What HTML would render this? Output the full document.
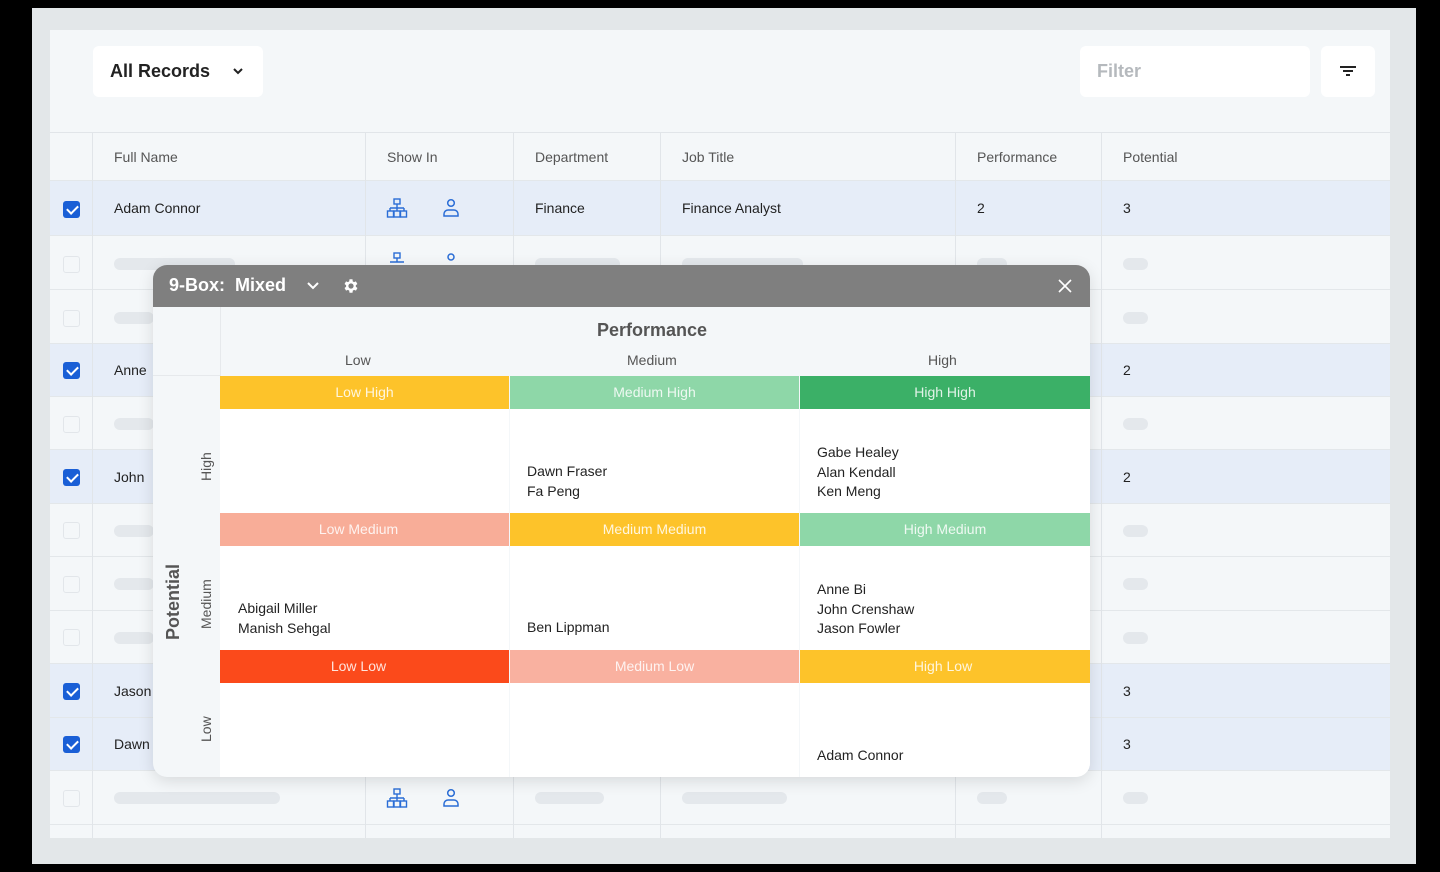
<!DOCTYPE html><html><head><meta charset="utf-8"><style>
*{box-sizing:border-box;margin:0;padding:0}
body{width:1440px;height:872px;background:#000;position:relative;overflow:hidden;font-family:"Liberation Sans",sans-serif;color:#222}
.a{position:absolute}
.frame{left:32px;top:8px;width:1384px;height:856px;background:#e3e7e9}
.panel{left:50px;top:30px;width:1340px;height:808px;background:#f4f7f9;overflow:hidden}
.btn{background:#fff;border-radius:6px}
.row{left:0;width:1340px;border-bottom:1px solid #e3e7ea}
.sel{background:#e6edf8}
.vl{top:102px;width:1px;height:706px;background:#e1e5e9}
.t{font-size:14px;color:#222}
.h{font-size:14px;color:#555}
.cb{width:17px;height:17px;border-radius:3px}
.cbon{background:#1a5fd6}
.cbon::after{content:"";position:absolute;left:4px;top:4px;width:9px;height:5px;border-left:2px solid #fff;border-bottom:2px solid #fff;transform:rotate(-45deg)}
.cboff{border:1px solid #e2e6ea;background:#f4f7f9}
.bar{height:12px;border-radius:6px;background:#e4e8ec}
.modal{left:153px;top:265px;width:937px;height:512px;border-radius:14px;background:#f4f7f9;overflow:hidden;box-shadow:0 4px 16px rgba(0,0,0,.12)}
.mh{left:0;top:0;width:937px;height:42px;background:#7f7f7f}
.band{height:33px;color:rgba(255,255,255,.85);font-size:14px;text-align:center;line-height:33px}
.cell{background:#fff}
.names{font-size:14px;color:#222;line-height:19.5px}
</style></head><body>
<div class="a frame"></div>
<div class="a panel">
 <div class="a btn" style="left:43px;top:16px;width:170px;height:51px"></div>
 <div class="a" style="left:60px;top:31px;font-size:18px;font-weight:bold;color:#222">All Records</div>
 <svg class="a" style="left:181px;top:36px" width="14" height="10" viewBox="0 0 14 10"><path d="M3 3l4 4 4-4" fill="none" stroke="#222" stroke-width="2"/></svg>
 <div class="a btn" style="left:1030px;top:16px;width:230px;height:51px"></div>
 <div class="a" style="left:1047px;top:31px;font-size:18px;font-weight:bold;color:#b5b9bd">Filter</div>
 <div class="a btn" style="left:1271px;top:16px;width:54px;height:51px"></div>
 <svg class="a" style="left:1289px;top:35px" width="18" height="14" viewBox="0 0 18 14"><path d="M1 2h16M4 6h10M7 10h4" stroke="#222" stroke-width="2"/></svg>

 <div class="a row" style="top:102px;height:49px;border-top:1px solid #e1e5e9"></div>
 <div class="a h" style="left:64px;top:119px">Full Name</div>
 <div class="a h" style="left:337px;top:119px">Show In</div>
 <div class="a h" style="left:485px;top:119px">Department</div>
 <div class="a h" style="left:632px;top:119px">Job Title</div>
 <div class="a h" style="left:927px;top:119px">Performance</div>
 <div class="a h" style="left:1073px;top:119px">Potential</div>

 <div class="a row sel" style="top:151px;height:55px"></div>
 <div class="a row" style="top:206px;height:54px"></div>
 <div class="a row" style="top:260px;height:54px"></div>
 <div class="a row sel" style="top:314px;height:53px"></div>
 <div class="a row" style="top:367px;height:53px"></div>
 <div class="a row sel" style="top:420px;height:54px"></div>
 <div class="a row" style="top:474px;height:53px"></div>
 <div class="a row" style="top:527px;height:54px"></div>
 <div class="a row" style="top:581px;height:53px"></div>
 <div class="a row sel" style="top:634px;height:54px"></div>
 <div class="a row sel" style="top:688px;height:53px"></div>
 <div class="a row" style="top:741px;height:54px"></div>

 <div class="a vl" style="left:42px"></div>
 <div class="a vl" style="left:315px"></div>
 <div class="a vl" style="left:463px"></div>
 <div class="a vl" style="left:610px"></div>
 <div class="a vl" style="left:905px"></div>
 <div class="a vl" style="left:1051px"></div>

 <div class="a cb cbon" style="left:13px;top:171px"></div>
 <div class="a t" style="left:64px;top:170px">Adam Connor</div>
 <div class="a t" style="left:485px;top:170px">Finance</div>
 <div class="a t" style="left:632px;top:170px">Finance Analyst</div>
 <div class="a t" style="left:927px;top:170px">2</div>
 <div class="a t" style="left:1073px;top:170px">3</div>
 <div class="a cb cboff" style="left:13px;top:226px"></div>
 <div class="a cb cboff" style="left:13px;top:280px"></div>
 <div class="a cb cbon" style="left:13px;top:332px"></div>
 <div class="a cb cboff" style="left:13px;top:386px"></div>
 <div class="a cb cbon" style="left:13px;top:439px"></div>
 <div class="a cb cboff" style="left:13px;top:492px"></div>
 <div class="a cb cboff" style="left:13px;top:546px"></div>
 <div class="a cb cboff" style="left:13px;top:599px"></div>
 <div class="a cb cbon" style="left:13px;top:653px"></div>
 <div class="a cb cbon" style="left:13px;top:706px"></div>
 <div class="a cb cboff" style="left:13px;top:760px"></div>
 <div class="a t" style="left:64px;top:332px">Anne</div>
 <div class="a t" style="left:64px;top:439px">John</div>
 <div class="a t" style="left:64px;top:653px">Jason</div>
 <div class="a t" style="left:64px;top:706px">Dawn</div>
 <div class="a t" style="left:1073px;top:332px">2</div>
 <div class="a t" style="left:1073px;top:439px">2</div>
 <div class="a t" style="left:1073px;top:653px">3</div>
 <div class="a t" style="left:1073px;top:706px">3</div>
 <div class="a bar" style="left:64px;top:228px;width:121px"></div>
 <div class="a bar" style="left:485px;top:228px;width:85px"></div>
 <div class="a bar" style="left:632px;top:228px;width:121px"></div>
 <div class="a bar" style="left:927px;top:228px;width:30px"></div>
 <div class="a bar" style="left:1073px;top:228px;width:25px"></div>
 <div class="a bar" style="left:64px;top:282px;width:40px"></div>
 <div class="a bar" style="left:1073px;top:282px;width:25px"></div>
 <div class="a bar" style="left:64px;top:388px;width:40px"></div>
 <div class="a bar" style="left:1073px;top:388px;width:25px"></div>
 <div class="a bar" style="left:64px;top:495px;width:40px"></div>
 <div class="a bar" style="left:1073px;top:495px;width:25px"></div>
 <div class="a bar" style="left:64px;top:548px;width:40px"></div>
 <div class="a bar" style="left:1073px;top:548px;width:25px"></div>
 <div class="a bar" style="left:64px;top:602px;width:40px"></div>
 <div class="a bar" style="left:1073px;top:602px;width:25px"></div>
 <div class="a bar" style="left:64px;top:762px;width:166px"></div>
 <div class="a bar" style="left:485px;top:762px;width:69px"></div>
 <div class="a bar" style="left:632px;top:762px;width:105px"></div>
 <div class="a bar" style="left:927px;top:762px;width:30px"></div>
 <div class="a bar" style="left:1073px;top:762px;width:25px"></div>
 <svg class="a" style="left:336px;top:168px" width="22" height="22" viewBox="0 0 22 22"><g fill="none" stroke="#2a6dd6" stroke-width="1.4"><rect x="8" y="1" width="6" height="5"/><path d="M11 6v4M4 10h14M4 10v3M18 10v3M11 10v3"/><rect x="1.5" y="13" width="6" height="6"/><rect x="14.5" y="13" width="6" height="6"/><rect x="8" y="13" width="6" height="6"/></g></svg>
 <svg class="a" style="left:392px;top:168px" width="18" height="20" viewBox="0 0 18 20"><g fill="none" stroke="#2a6dd6" stroke-width="1.5"><circle cx="9" cy="5" r="3.3"/><path d="M2 18v-2a4 4 0 0 1 4-4h6a4 4 0 0 1 4 4v2z"/></g></svg>
 <svg class="a" style="left:336px;top:222px" width="22" height="22" viewBox="0 0 22 22"><g fill="none" stroke="#2a6dd6" stroke-width="1.4"><rect x="8" y="1" width="6" height="5"/><path d="M11 6v4M4 10h14"/></g></svg>
 <svg class="a" style="left:392px;top:222px" width="18" height="20" viewBox="0 0 18 20"><circle cx="9" cy="5" r="3" fill="none" stroke="#2a6dd6" stroke-width="1.5"/></svg>
 <svg class="a" style="left:336px;top:758px" width="22" height="22" viewBox="0 0 22 22"><g fill="none" stroke="#2a6dd6" stroke-width="1.4"><rect x="8" y="1" width="6" height="5"/><path d="M11 6v4M4 10h14M4 10v3M18 10v3M11 10v3"/><rect x="1.5" y="13" width="6" height="6"/><rect x="14.5" y="13" width="6" height="6"/><rect x="8" y="13" width="6" height="6"/></g></svg>
 <svg class="a" style="left:392px;top:758px" width="18" height="20" viewBox="0 0 18 20"><g fill="none" stroke="#2a6dd6" stroke-width="1.5"><circle cx="9" cy="5" r="3.3"/><path d="M2 18v-2a4 4 0 0 1 4-4h6a4 4 0 0 1 4 4v2z"/></g></svg>
</div>

<div class="a modal">
 <div class="a mh"></div>
 <div class="a" style="left:16px;top:10px;font-size:18px;font-weight:bold;color:#fff">9-Box: &nbsp;Mixed</div>
 <svg class="a" style="left:153px;top:15px" width="14" height="12" viewBox="0 0 14 12"><path d="M2 3l5 5 5-5" fill="none" stroke="#fff" stroke-width="2"/></svg>
 <svg class="a" style="left:189px;top:12px" width="18" height="18" viewBox="0 0 24 24"><path fill="#fff" d="M19.4 13a7.5 7.5 0 0 0 0-2l2.1-1.6-2-3.5-2.5 1a7.6 7.6 0 0 0-1.7-1L15 3h-4l-.4 2.9a7.6 7.6 0 0 0-1.7 1l-2.5-1-2 3.5L6.5 11a7.5 7.5 0 0 0 0 2l-2.1 1.6 2 3.5 2.5-1a7.6 7.6 0 0 0 1.7 1L11 21h4l.4-2.9a7.6 7.6 0 0 0 1.7-1l2.5 1 2-3.5zM13 15.5a3.5 3.5 0 1 1 0-7 3.5 3.5 0 0 1 0 7z" transform="translate(-1 0)"/></svg>
 <svg class="a" style="left:905px;top:14px" width="14" height="14" viewBox="0 0 14 14"><path d="M1 1l12 12M13 1L1 13" stroke="#fff" stroke-width="1.6"/></svg>
 <div class="a" style="left:67px;top:42px;width:1px;height:470px;background:#e6e9ec"></div>
 <div class="a" style="left:0;top:110px;width:67px;height:1px;background:#e6e9ec"></div>
 <div class="a" style="left:444px;top:55px;font-size:18px;font-weight:bold;color:#555">Performance</div>
 <div class="a h" style="left:192px;top:87px">Low</div>
 <div class="a h" style="left:474px;top:87px">Medium</div>
 <div class="a h" style="left:775px;top:87px">High</div>
 <div class="a" style="left:10px;top:375px;width:0;height:0"><div style="transform:rotate(-90deg);transform-origin:0 0;position:absolute;left:0;top:0;font-size:18px;font-weight:bold;color:#555;white-space:nowrap">Potential</div></div>
 <div class="a" style="left:45px;top:216px"><div style="transform:rotate(-90deg);transform-origin:0 0;position:absolute;font-size:14px;color:#555;white-space:nowrap">High</div></div>
 <div class="a" style="left:45px;top:364px"><div style="transform:rotate(-90deg);transform-origin:0 0;position:absolute;font-size:14px;color:#555;white-space:nowrap">Medium</div></div>
 <div class="a" style="left:45px;top:477px"><div style="transform:rotate(-90deg);transform-origin:0 0;position:absolute;font-size:14px;color:#555;white-space:nowrap">Low</div></div>

 <div class="a band" style="left:67px;top:111px;width:289px;background:#fdc32a">Low High</div>
 <div class="a band" style="left:357px;top:111px;width:289px;background:#8ed7a8">Medium High</div>
 <div class="a band" style="left:647px;top:111px;width:290px;background:#3bb067">High High</div>
 <div class="a cell" style="left:67px;top:144px;width:289px;height:104px"></div>
 <div class="a cell" style="left:357px;top:144px;width:289px;height:104px"></div>
 <div class="a cell" style="left:647px;top:144px;width:290px;height:104px"></div>
 <div class="a band" style="left:67px;top:248px;width:289px;background:#f8ad98;padding-right:12px">Low Medium</div>
 <div class="a band" style="left:357px;top:248px;width:289px;background:#fdc32a">Medium Medium</div>
 <div class="a band" style="left:647px;top:248px;width:290px;background:#8ed7a8">High Medium</div>
 <div class="a cell" style="left:67px;top:281px;width:289px;height:104px"></div>
 <div class="a cell" style="left:357px;top:281px;width:289px;height:104px"></div>
 <div class="a cell" style="left:647px;top:281px;width:290px;height:104px"></div>
 <div class="a band" style="left:67px;top:385px;width:289px;background:#fb4a1b;padding-right:12px">Low Low</div>
 <div class="a band" style="left:357px;top:385px;width:289px;background:#f9b1a0">Medium Low</div>
 <div class="a band" style="left:647px;top:385px;width:290px;background:#fdc32a;padding-right:4px">High Low</div>
 <div class="a cell" style="left:67px;top:418px;width:289px;height:94px"></div>
 <div class="a cell" style="left:357px;top:418px;width:289px;height:94px"></div>
 <div class="a cell" style="left:647px;top:418px;width:290px;height:94px"></div>

 <div class="a names" style="left:374px;top:197px">Dawn Fraser<br>Fa Peng</div>
 <div class="a names" style="left:664px;top:178px">Gabe Healey<br>Alan Kendall<br>Ken Meng</div>
 <div class="a names" style="left:85px;top:334px">Abigail Miller<br>Manish Sehgal</div>
 <div class="a names" style="left:374px;top:353px">Ben Lippman</div>
 <div class="a names" style="left:664px;top:315px">Anne Bi<br>John Crenshaw<br>Jason Fowler</div>
 <div class="a names" style="left:664px;top:481px">Adam Connor</div>
</div>
</body></html>
